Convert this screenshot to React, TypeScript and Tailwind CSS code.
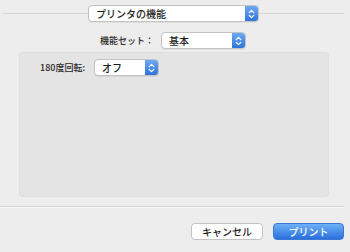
import React from 'react';

const FONT = { fontFamily: '"Noto Sans CJK JP", "Liberation Sans", sans-serif' };

function Stepper() {
  return (
    <svg width="7" height="10" viewBox="0 0 7 10" fill="none" stroke="white" strokeWidth="1.3" strokeLinecap="round" strokeLinejoin="round">
      <path d="M1.2 3.6 L3.5 1.4 L5.8 3.6" />
      <path d="M1.2 6.4 L3.5 8.6 L5.8 6.4" />
    </svg>
  );
}

function PopUp({ label, width }: { label: string; width: string }) {
  return (
    <div
      className={`flex h-[17px] ${width} items-stretch overflow-hidden rounded-[4px] border border-[#c3c3c3] bg-white shadow-[0_1px_0_rgba(0,0,0,0.06)]`}
    >
      <span className="flex flex-1 items-center pl-[7px] text-[10px] font-medium leading-none text-[#1e1e1e]">{label}</span>
      <span className="flex w-[13px] items-center justify-center bg-gradient-to-b from-[#6eaaf2] to-[#2f74d8]">
        <Stepper />
      </span>
    </div>
  );
}

export default function App() {
  return (
    <div className="flex h-[252px] w-[350px] flex-col bg-[#ededed]" style={FONT}>
      <div className="flex items-center pl-[3px] pr-[6px] pt-[5px]">
        <div className="h-px flex-1 bg-[#d6d6d6]" />
        <PopUp label="プリンタの機能" width="w-[171px]" />
        <div className="h-px flex-1 bg-[#d6d6d6]" />
      </div>

      <div className="mt-[10px] flex items-center pl-[100px]">
        <span className="w-[61px] text-[9px] font-medium leading-none text-[#2a2a2a]">機能セット：</span>
        <PopUp label="基本" width="w-[85px]" />
      </div>

      <div className="ml-[19px] mt-[3px] h-[145px] w-[310px] rounded-[4px] border border-[#dedede] bg-[#e4e4e4]">
        <div className="flex items-center pl-[20px] pt-[6px]">
          <span className="w-[54px] text-[9px] font-medium leading-none text-[#2a2a2a]">180度回転:</span>
          <PopUp label="オフ" width="w-[65px]" />
        </div>
      </div>

      <div className="mt-[9px] h-px w-[344px] bg-[#d4d4d4]" />
      <div className="h-px w-[344px] bg-[#f6f6f6]" />

      <div className="mt-[15px] flex justify-end gap-[10px] pr-[6px]">
        <button className="flex h-[17px] w-[72px] items-center justify-center rounded-[4px] border border-[#c3c3c3] bg-white text-[10px] font-medium leading-none text-[#1e1e1e]">
          キャンセル
        </button>
        <button className="flex h-[17px] w-[71px] items-center justify-center rounded-[4px] border border-[#3a78d4] bg-gradient-to-b from-[#6db0f7] to-[#2a6fdb] text-[10px] font-medium leading-none text-white">
          プリント
        </button>
      </div>
    </div>
  );
}
